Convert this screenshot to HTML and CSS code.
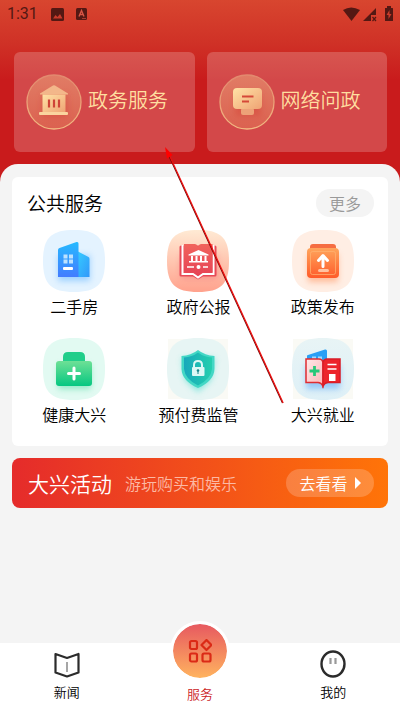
FILE: index.html
```html
<!DOCTYPE html>
<html lang="zh-CN">
<head>
  <meta charset="UTF-8" />
  <meta name="viewport" content="width=device-width, initial-scale=1.0"/>
  <title>服务</title>
  <link rel="stylesheet" href="styles.css">
</head>
<body>

  <header class="top">
    <div class="status">
      <span class="time">1:31</span>
      <svg width="13" height="13" viewBox="0 0 13 13"><rect width="13" height="13" rx="1.500" fill="#541813"/><path d="M2 10.500l2.500-3.500 2 2 2.500-3 2.500 4.500z" fill="#c93a2b"/></svg>
      <svg class="status-a" width="11" height="12" viewBox="0 0 11 12"><rect width="11" height="12" rx="1.500" fill="#541813"/><path d="M3 8.500l2.500-6 2.500 6M4 6.500h3" fill="none" stroke="#d75545" stroke-width="1.400"/><path d="M6 10.500h4" stroke="#a53a2d"/></svg>
      <svg class="signals" width="50" height="16" viewBox="0 0 50 16">
        <g fill="#541813">
          <path d="M0 4Q8-1 17 4L8.500 15z"/>
          <path d="M20 15L33 2v7h-5v6z"/>
          <path d="M42 2h2V0h4v2h1.500q.500 0 .500.500V14.500q0 .500-.500.500h-7q-.500 0-.500-.500V2.500z"/>
        </g>
        <path d="M29.500 11l3.500 4M33 11l-3.500 4" stroke="#541813" stroke-width="1.200"/>
        <path d="M46.500 4l-3 5h2v4l3-5h-2z" fill="#cc3b2b"/>
      </svg>
    </div>
    <div class="entries">
      <a class="entry" href="#">
        <svg width="56" height="56" viewBox="0 0 56 56">
          <defs>
            <linearGradient id="gold" x1="0" y1="0" x2="1" y2="1"><stop offset="0" stop-color="#ffe3a6"/><stop offset="1" stop-color="#efa374"/></linearGradient>
            <linearGradient id="disc" x1="0" y1="0" x2="0" y2="1"><stop offset="0" stop-color="#e17c65"/><stop offset="1" stop-color="#db6150"/></linearGradient>
            <linearGradient id="ring" x1="0" y1="0" x2="0" y2="1"><stop offset="0" stop-color="#e2896e"/><stop offset="1" stop-color="#f2ba82"/></linearGradient>
            <filter id="soft" x="-50%" y="-50%" width="200%" height="200%"><feGaussianBlur stdDeviation="3"/></filter>
          </defs>
          <circle cx="28" cy="28" r="27" fill="url(#disc)" stroke="url(#ring)" stroke-width="1.300"/>
          <rect x="16" y="21" width="25" height="22" fill="#d74c3d" opacity=".6" filter="url(#soft)"/>
          <path d="M14 19.500l13-8q1-.700 2 0l13 8v1H14z" fill="#f3b78a"/>
          <path d="M16.500 20.500h23V38h-23z" fill="url(#gold)"/>
          <path d="M23 25.500v8M28 25.500v8M33 25.500v8" stroke="#cf4437" stroke-width="2.200"/>
          <rect x="13" y="38" width="29" height="3" rx="1" fill="#fad49e"/>
        </svg>
        <span>政务服务</span>
      </a>
      <a class="entry" href="#">
        <svg width="56" height="56" viewBox="0 0 56 56">
          <circle cx="28" cy="28" r="27" fill="url(#disc)" stroke="url(#ring)" stroke-width="1.300"/>
          <rect x="16" y="20" width="26" height="22" fill="#d74c3d" opacity=".6" filter="url(#soft)"/>
          <rect x="22" y="34" width="13" height="7" rx="2" fill="#eda278"/>
          <rect x="14" y="14" width="29" height="21" rx="4" fill="url(#gold)"/>
          <path d="M23 22.500h11.500M23 27.500h7" stroke="#d54838" stroke-width="2.200"/>
        </svg>
        <span>网络问政</span>
      </a>
    </div>
  </header>

  <main class="sheet">
    <section class="card">
      <div class="card-head">
        <h2>公共服务</h2>
        <button class="more" type="button">更多</button>
      </div>
      <div class="grid">
        <a class="service" href="#">
          <svg width="62" height="62" viewBox="0 0 62 62">
            <defs>
              <linearGradient id="blue" x1="0" y1="0" x2="0" y2="1"><stop offset="0" stop-color="#26baff"/><stop offset="1" stop-color="#437cff"/></linearGradient>
              <linearGradient id="blue2" x1="0" y1="0" x2="1" y2="1"><stop offset="0" stop-color="#36ceff"/><stop offset="1" stop-color="#3298fa"/></linearGradient>
            </defs>
            <path d="M31 0C54 0 62 8 62 31S54 62 31 62 0 54 0 31 8 0 31 0z" fill="#e4f3ff"/>
            <path d="M15 25h32v26H15z" fill="#7fc2ff" opacity=".7" filter="url(#soft)"/>
            <path d="M34 21l11.500 6q1 .600 1 2v18H34z" fill="url(#blue2)"/>
            <path d="M15 20q0-1.500 1.500-2l17-6q2-.500 2 1.500V47H15z" fill="url(#blue)"/>
            <path d="M20.500 24.500h4v4h-4zM26 24.500h4v4h-4zM20.500 29.500h4v4h-4zM26 29.500h4v4h-4z" fill="#bce2ff"/>
            <rect x="20" y="37" width="10" height="3" rx="1" fill="#fff"/>
          </svg>
          <span>二手房</span>
        </a>
        <a class="service" href="#">
          <svg width="62" height="62" viewBox="0 0 62 62">
            <defs>
              <linearGradient id="peach" x1="0" y1="0" x2="0" y2="1"><stop offset="0" stop-color="#ffead4"/><stop offset="1" stop-color="#ffa28d"/></linearGradient>
              <linearGradient id="red" x1="0" y1="0" x2="0" y2="1"><stop offset="0" stop-color="#f1635c"/><stop offset="1" stop-color="#e64355"/></linearGradient>
            </defs>
            <path d="M31 0C54 0 62 8 62 31S54 62 31 62 0 54 0 31 8 0 31 0z" fill="url(#peach)"/>
            <path d="M14 25h36v23H14z" fill="#e9596a" opacity=".4" filter="url(#soft)"/>
            <path d="M12.500 17q0-1.500 1.500-1.500h34q1.500 0 1.500 1.500v28q0 1.500-1.500 1.500H36l-5 3-5-3H14q-1.500 0-1.500-1.500z" fill="#e84a57"/>
            <path d="M15.500 15v29H26l5 3.500 5-3.500h10.500V15" fill="none" stroke="#fff" stroke-width="2"/>
            <path d="M17 14h11q2 0 3 3 1-3 3-3h11.500v28.500H35.500L31 45.500l-4.500-3H17z" fill="url(#red)"/>
            <path d="M21.500 25.500v-1L31.500 20l10 4.500v1zM24 26h2v5h-2zM28.500 26h2v5h-2zM33 26h2v5h-2zM37.500 26h2v5h-2zM22 31h19v1.500H22z" fill="#fff"/>
            <path d="M20 37h7M36 37h5" stroke="#fff" stroke-width="1.500"/><circle cx="31.500" cy="37" r="2" fill="#fff"/>
          </svg>
          <span>政府公报</span>
        </a>
        <a class="service" href="#">
          <svg width="62" height="62" viewBox="0 0 62 62">
            <defs><linearGradient id="orange" x1="0" y1="0" x2="0" y2="1"><stop offset="0" stop-color="#ffa55c"/><stop offset="1" stop-color="#ff5b29"/></linearGradient></defs>
            <path d="M31 0C54 0 62 8 62 31S54 62 31 62 0 54 0 31 8 0 31 0z" fill="#ffeee4"/>
            <rect x="16" y="24" width="30" height="28" fill="#ff9966" opacity=".6" filter="url(#soft)"/>
            <path d="M18 19v-2q0-3 3-3h20q3 0 3 3v2z" fill="#f66d42"/>
            <rect x="15" y="18" width="32" height="30" rx="4" fill="url(#orange)"/>
            <rect x="18.500" y="21.500" width="25" height="23" rx="2" fill="none" stroke="#ffb574" opacity=".7"/>
            <path d="M31 36.500V26M26.500 30.500l4.500-5 4.500 5" fill="none" stroke="#fff" stroke-width="3" stroke-linecap="round" stroke-linejoin="round"/>
            <rect x="26" y="39" width="11" height="3" rx="1.500" fill="#ffc2a1"/>
          </svg>
          <span>政策发布</span>
        </a>
        <a class="service" href="#">
          <svg width="62" height="62" viewBox="0 0 62 62">
            <defs><linearGradient id="green" x1="0" y1="0" x2="0" y2="1"><stop offset="0" stop-color="#6ee096"/><stop offset="1" stop-color="#06c781"/></linearGradient></defs>
            <path d="M31 0C54 0 62 8 62 31S54 62 31 62 0 54 0 31 8 0 31 0z" fill="#e2faf2"/>
            <rect x="15" y="27" width="33" height="24" fill="#5cdda8" opacity=".6" filter="url(#soft)"/>
            <path d="M20 25v-6q0-5 5-5h12q5 0 5 5v6z" fill="#20ce8a"/>
            <rect x="13" y="23" width="36" height="25" rx="3" fill="url(#green)"/>
            <path d="M31 30v11M25.500 35.500h11" stroke="#fff" stroke-width="3" stroke-linecap="round"/>
          </svg>
          <span>健康大兴</span>
        </a>
        <a class="service" href="#">
          <svg width="62" height="62" viewBox="0 0 62 62">
            <defs><linearGradient id="teal" x1="0" y1="0" x2="1" y2="0"><stop offset="0" stop-color="#19a8bb"/><stop offset="1" stop-color="#23cfae"/></linearGradient></defs>
            <path d="M1 1h60v60H1z" fill="#fafaf5"/>
            <path d="M31 0C54 0 62 8 62 31S54 62 31 62 0 54 0 31 8 0 31 0z" fill="#e7f5f4"/>
            <path d="M15 20h33L44 42 31 54 18 42z" fill="#47dbcc" opacity=".6" filter="url(#soft)"/>
            <path d="M31 12q7 5.500 16.500 6v13Q47 43 31 50 15 43 14.500 31V18Q24 17.500 31 12z" fill="#43d7c5"/>
            <path d="M31 14.500q6 4.500 14 5v11.500Q44 41 31 47.500 18 41 17 31V19.500q8-.500 14-5z" fill="url(#teal)"/>
            <path d="M27 31v-4q0-4 4-4t4 4v4" fill="none" stroke="#dcf8f5" stroke-width="2"/>
            <rect x="25" y="29" width="12.500" height="9" rx="1" fill="#dcf8f5"/>
            <circle cx="31" cy="32.500" r="1.300" fill="#16838b"/><path d="M31 33v3" stroke="#16838b"/>
          </svg>
          <span>预付费监管</span>
        </a>
        <a class="service" href="#">
          <svg width="62" height="62" viewBox="0 0 62 62">
            <defs>
              <linearGradient id="page" x1="0" y1="0" x2="1" y2="1"><stop offset="0" stop-color="#ffe8e8"/><stop offset="1" stop-color="#ffb5b8"/></linearGradient>
              <linearGradient id="sky" x1="0" y1="0" x2="0" y2="1"><stop offset="0" stop-color="#e8f4f5"/><stop offset="1" stop-color="#def0f7"/></linearGradient>
            </defs>
            <path d="M1 1h60v60H1z" fill="#fafaf5"/>
            <path d="M31 0C54 0 62 8 62 31S54 62 31 62 0 54 0 31 8 0 31 0z" fill="url(#sky)"/>
            <path d="M14 27h34v24H14z" fill="#62aaf7" opacity=".6" filter="url(#soft)"/>
            <path d="M15 21v-3q0-1 1-1l17-5.500q2-.500 2 1.500v20H15z" fill="#299ff5"/>
            <path d="M20 18.500h4v3h-4zM26 18.500h4v3h-4z" fill="#9edbff"/>
            <path d="M14 21h13q3 0 4 3v24q-2-3.500-5-3.500H14z" fill="url(#page)" stroke="#df2d32" stroke-width="1.500"/>
            <path d="M31 24q1-3 4-3h13v23.500H36q-3 0-5 3.500z" fill="#ed242b" stroke="#d91c27" stroke-width="1.500"/>
            <path d="M22.500 28v10M17.500 33h10" stroke="#29c879" stroke-width="2.800"/>
            <path d="M35.500 26.500h9M35.500 31h9" stroke="#fff" stroke-width="1.500"/>
            <path d="M37 36h6.500v7H37z" fill="#fff"/>
          </svg>
          <span>大兴就业</span>
        </a>
      </div>
    </section>

    <section class="banner">
      <h2>大兴活动</h2>
      <p>游玩购买和娱乐</p>
      <button class="go" type="button">去看看
        <svg width="6" height="12" viewBox="0 0 6 12"><path d="M0 0l6 6-6 6z" fill="#fff"/></svg>
      </button>
    </section>
  </main>

  <nav class="tabs">
    <a class="tab" href="#">
      <svg width="26" height="26" viewBox="0 0 26 26"><path d="M1.500 2L13 6l11.500-4v18.500L13 24.500 1.500 20.500z" fill="none" stroke="#2b2b2b" stroke-width="2.200" stroke-linejoin="round"/><path d="M13 10v10" stroke="#888" stroke-width="1.500"/></svg>
      <span>新闻</span>
    </a>
    <a class="tab active" href="#">
      <span class="bubble">
        <svg width="24" height="24" viewBox="0 0 24 24"><g fill="none" stroke="#db2a16" stroke-width="2.200"><rect x="2" y="2" width="7" height="8" rx="1.500"/><rect x="2" y="14.500" width="7" height="8" rx="1.500"/><rect x="14.500" y="14.500" width="8" height="8" rx="1.500"/><path d="M18.500 1l5 5-5 5-5-5z" stroke-linejoin="round"/></g></svg>
      </span>
      <span>服务</span>
    </a>
    <a class="tab" href="#">
      <svg width="26" height="28" viewBox="0 0 26 28"><ellipse cx="13" cy="14" rx="11.500" ry="12.500" fill="none" stroke="#2b2b2b" stroke-width="2.400"/><path d="M10.500 8v6M15.500 8v6" stroke="#999" stroke-width="2.200"/></svg>
      <span>我的</span>
    </a>
  </nav>

  <svg class="arrow" width="120" height="258" viewBox="0 0 120 258">
    <path d="M117.500 256L4 9" stroke="#6d0808" stroke-width="1.200"/>
    <path d="M118.200 256L4.700 9" stroke="#f01010" stroke-width="1.200"/>
    <path d="M0 0l7.500 8-5.500 3.500z" fill="#f00"/>
  </svg>

</body>
</html>
```
FILE: styles.css
```css
* {
  box-sizing: border-box;
}

body {
  margin: 0;
  min-height: 100vh;
  display: flex;
  flex-direction: column;
  position: relative;
  font-family: "Noto Sans CJK SC", sans-serif;
  font-size: 16px;
  font-weight: 350;
  line-height: 24px;
  color: #000;
  background: #f4f4f4;
}

a {
  color: inherit;
  text-decoration: none;
}

h2,
p {
  margin: 0;
  font-weight: inherit;
}

svg {
  display: block;
  flex: none;
}

button {
  border: none;
  padding: 0;
  font: inherit;
  cursor: pointer;
}

.top {
  padding-bottom: 30px;
  background: linear-gradient(#d8462f 0, #cf3026 45px, #c91b1c 80px);
}

.status {
  display: flex;
  align-items: center;
  height: 28px;
  padding: 0 7px;
}

.time {
  width: 44px;
  font-family: Roboto, sans-serif;
  font-weight: 400;
  color: #541813;
}

.status-a {
  margin-left: 12px;
}

.signals {
  margin-left: auto;
}

.entries {
  display: grid;
  grid-template-columns: 1fr 1fr;
  gap: 12px;
  padding: 24px 13px 0 14px;
}

.entry {
  display: flex;
  align-items: center;
  gap: 6px;
  height: 100px;
  padding-left: 12px;
  border-radius: 6px;
  background: rgba(255, 255, 255, 0.2);
  color: #ffdfa0;
  font-size: 20px;
  line-height: 28px;
}

.entry span {
  padding-bottom: 4px;
}

.sheet {
  flex: 1;
  margin-top: -18px;
  padding: 13px 12px 24px;
  border-radius: 18px 18px 0 0;
  background: #f4f4f4;
}

.card {
  padding: 12px 0 20px;
  border-radius: 6px;
  background: #fff;
}

.card-head {
  display: flex;
  align-items: center;
  justify-content: space-between;
  padding: 0 14px 0 15px;
}

.card-head h2 {
  font-size: 19px;
  line-height: 28px;
}

.more {
  width: 58px;
  height: 28px;
  border-radius: 14px;
  background: #f4f4f4;
  color: #999;
}

.grid {
  display: grid;
  grid-template-columns: repeat(3, 1fr);
  row-gap: 20px;
  padding: 13px 3px 0 0;
}

.service {
  display: flex;
  flex-direction: column;
  align-items: center;
  gap: 2px;
}

.banner {
  display: flex;
  align-items: center;
  height: 50px;
  margin-top: 12px;
  padding: 0 14px 0 16px;
  border-radius: 8px;
  background: linear-gradient(to right, #e52b2b, #ff7408);
  color: #fff;
}

.banner h2 {
  font-size: 21px;
  line-height: 28px;
}

.banner p {
  margin-left: 13px;
  color: #fcb9a4;
}

.go {
  display: flex;
  align-items: center;
  justify-content: center;
  gap: 7px;
  width: 88px;
  height: 28px;
  margin-left: auto;
  border-radius: 14px;
  background: rgba(255, 255, 255, 0.2);
  color: #fff;
}

.tabs {
  display: grid;
  grid-template-columns: repeat(3, 1fr);
  grid-template-rows: 68px;
  background: #fff;
}

/* content sits on the bottom edge, so the round bubble rises above the bar */
.tab {
  display: flex;
  flex-direction: column;
  align-items: center;
  justify-content: flex-end;
  gap: 4px;
  padding-bottom: 9px;
  font-size: 13px;
  line-height: 20px;
}

.active {
  gap: 3px;
  padding-bottom: 7px;
  color: #cc1d1f;
}

.bubble {
  display: flex;
  flex: none;
  align-items: center;
  justify-content: center;
  width: 60px;
  height: 60px;
  border-radius: 50%;
  border: 3px solid #fff;
  background: linear-gradient(#e75960, #ffb35f) padding-box;
}

/* pointer from the jobs tile up to the first entry */
.arrow {
  position: absolute;
  left: 165px;
  top: 147px;
  pointer-events: none;
}
```
